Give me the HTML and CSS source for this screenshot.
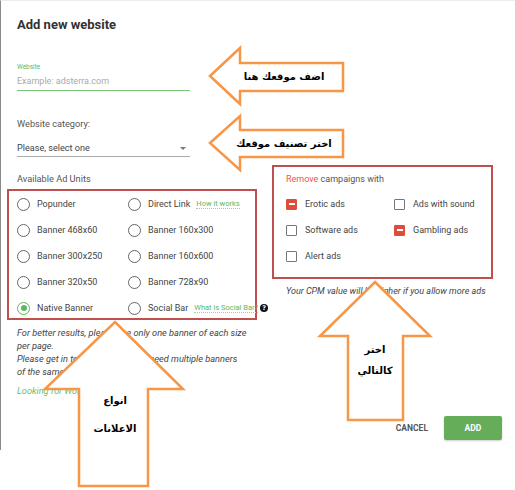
FILE: index.html
```html
<!DOCTYPE html>
<html lang="en">
<head>
    <meta charset="UTF-8">
    <title>Add new website</title>
    <link rel="stylesheet" href="styles.css">
</head>
<body>

    <!-- Диалог добавления сайта -->
    <div class="modal">
        <h2 class="modal-title">Add new website</h2>

        <div class="field">
            <div class="field-label">Website</div>
            <div class="field-input">Example: adsterra.com</div>
        </div>

        <div class="field">
            <div class="field-caption">Website category:</div>
            <div class="select">Please, select one <span class="caret"></span></div>
        </div>

        <div class="units">
            <div class="units-left">
                <div class="section-title">Available Ad Units</div>
                <div class="radio-grid">
                    <div class="radio"><span class="radio-dot"></span>Popunder</div>
                    <div class="radio"><span class="radio-dot"></span>Direct Link <a href="#" class="hint">How it works</a></div>
                    <div class="radio"><span class="radio-dot"></span>Banner 468x60</div>
                    <div class="radio"><span class="radio-dot"></span>Banner 160x300</div>
                    <div class="radio"><span class="radio-dot"></span>Banner 300x250</div>
                    <div class="radio"><span class="radio-dot"></span>Banner 160x600</div>
                    <div class="radio"><span class="radio-dot"></span>Banner 320x50</div>
                    <div class="radio"><span class="radio-dot"></span>Banner 728x90</div>
                    <div class="radio checked"><span class="radio-dot"></span>Native Banner</div>
                    <div class="radio"><span class="radio-dot"></span>Social Bar <a href="#" class="hint">What is Social Bar?</a><span class="help">?</span></div>
                </div>
                <p class="note">For better results, please use only one banner of each size per page.<br>Please get in touch with us if you need multiple banners<br>of the same size on one page.</p>
                <p class="note green">Looking for WordPress plugins</p>
            </div>

            <div class="units-right">
                <div class="filters">
                    <div class="section-title"><span class="red">Remove</span> campaigns with</div>
                    <div class="check-grid">
                        <div class="check checked"><span class="box"></span>Erotic ads</div>
                        <div class="check"><span class="box"></span>Ads with sound</div>
                        <div class="check"><span class="box"></span>Software ads</div>
                        <div class="check checked"><span class="box"></span>Gambling ads</div>
                        <div class="check"><span class="box"></span>Alert ads</div>
                    </div>
                </div>
                <p class="note">Your CPM value will be higher if you allow more ads</p>
            </div>
        </div>

        <div class="actions">
            <button class="btn-cancel">CANCEL</button>
            <button class="btn-add">ADD</button>
        </div>
    </div>

    <!-- Стрелки-подсказки поверх формы -->
    <svg class="hints" width="515" height="490" viewBox="0 0 515 490">
        <polygon class="arrow" points="210,76 240,48 240,63 343,63 343,91 240,91 240,104"/>
        <text x="284" y="80">اضف موقعك هنا</text>

        <polygon class="arrow" points="210,143 240,116 240,130 343,130 343,157 240,157 240,170"/>
        <text x="284" y="147">اختر تصنيف موقعك</text>

        <polygon class="arrow" points="115,322 183,389 148,389 148,486 79,486 79,389 45,389"/>
        <text x="115" y="404">انواع</text>
        <text x="115" y="432">الاعلانات</text>

        <polygon class="arrow" points="375,282 430,336 403,336 403,420 348,420 348,336 320,336"/>
        <text x="375" y="353">اختر</text>
        <text x="375" y="374">كالتالي</text>
    </svg>

</body>
</html>
```

FILE: styles.css
```css
* {
    box-sizing: border-box;
    margin: 0;
    padding: 0;
}

body {
    font-family: Roboto, 'Liberation Sans', sans-serif;
    background-color: #fff;
    color: #444;
    width: 515px;
    height: 490px;
    overflow: hidden;
}

/* Диалог */
.modal {
    height: 450px;
    border-left: 1px solid #8a8a8a;
    border-top: 1px solid #ececec;
    padding: 0 13px 10px 16px;
    display: flex;
    flex-direction: column;
}

.modal-title {
    padding-top: 15px;
    font-size: 13px;
    line-height: 18px;
    font-weight: 700;
    color: #333;
}

.field-label {
    margin-top: 29px;
    font-size: 6.5px;
    line-height: 9px;
    color: #5cb85c;
}

.field-input {
    width: 173px;
    margin-top: 2px;
    padding-bottom: 2px;
    font-size: 9px;
    line-height: 14px;
    color: #aaa;
    border-bottom: 1.5px solid #7cc576;
}

.field-caption {
    margin-top: 26px;
    font-size: 9.2px;
    line-height: 13px;
    color: #555;
}

.select {
    width: 173px;
    margin-top: 11px;
    padding-bottom: 1px;
    font-size: 9.1px;
    line-height: 14px;
    color: #444;
    border-bottom: 1px solid #aaa;
    display: flex;
    justify-content: space-between;
    align-items: center;
}

.caret {
    margin-right: 4px;
    border-left: 3px solid transparent;
    border-right: 3px solid transparent;
    border-top: 3px solid #777;
}

/* Рекламные форматы */
.units {
    display: flex;
    margin-top: 8px;
}

.units-left {
    width: 255px;
    padding-top: 8px;
}

.section-title {
    font-size: 9.2px;
    line-height: 12px;
    color: #555;
}

.red {
    color: #f0524a;
}

.radio-grid {
    display: grid;
    grid-template-columns: 111px 119px;
    grid-template-rows: repeat(5, 26px);
    height: 131px;
    width: 250px;
    margin: 4px 0 0 -10px;
    padding: 0 8px;
    border: 2px solid #c0504d;
}

.radio {
    display: flex;
    align-items: center;
    font-size: 9px;
    color: #444;
    white-space: nowrap;
}

.radio-dot {
    width: 13px;
    height: 13px;
    margin-right: 7px;
    border: 1.5px solid #666;
    border-radius: 50%;
    flex-shrink: 0;
    display: flex;
    align-items: center;
    justify-content: center;
}

.radio.checked .radio-dot {
    border-color: #5cb85c;
}

.radio.checked .radio-dot::after {
    content: "";
    width: 6px;
    height: 6px;
    border-radius: 50%;
    background: #5cb85c;
}

.hint {
    margin-left: 6px;
    font-size: 7.5px;
    color: #5cb85c;
    text-decoration: none;
    border-bottom: 1px dotted #9cd39c;
}

.help {
    width: 8px;
    height: 8px;
    margin-left: 2px;
    flex-shrink: 0;
    border-radius: 50%;
    background: #111;
    color: #fff;
    font-family: 'DejaVu Sans', sans-serif;
    font-size: 6.5px;
    font-weight: 700;
    line-height: 8px;
    text-align: center;
}

.note {
    width: 238px;
    margin-top: 6px;
    font-size: 9.2px;
    line-height: 13px;
    font-style: italic;
    color: #444;
}

.note.green {
    color: #6abf69;
}

/* Фильтры кампаний */
.filters {
    width: 221px;
    padding: 6px 10px 8px 12px;
    border: 2px solid #c0504d;
}

.filters .section-title {
    font-size: 9px;
}

.check-grid {
    display: grid;
    grid-template-columns: 108px 1fr;
    grid-auto-rows: 26px;
    margin-top: 6px;
}

.check {
    display: flex;
    align-items: center;
    font-size: 9px;
    color: #444;
    white-space: nowrap;
}

.box {
    width: 11px;
    height: 11px;
    margin-right: 8px;
    border: 1.5px solid #777;
    border-radius: 1px;
    display: flex;
    align-items: center;
    justify-content: center;
}

.check.checked .box {
    background: #e04b3c;
    border-color: #e04b3c;
}

.check.checked .box::after {
    content: "";
    width: 6px;
    height: 1.5px;
    background: #fff;
}

.units-right .note {
    width: auto;
    margin-left: 14px;
    font-size: 9px;
}

/* Кнопки */
.actions {
    margin-top: auto;
    display: flex;
    justify-content: flex-end;
    align-items: center;
}

.btn-cancel {
    margin-right: 16px;
    background: none;
    border: none;
    font-family: Roboto, sans-serif;
    font-size: 8.5px;
    font-weight: 700;
    color: #555;
}

.btn-add {
    width: 58px;
    height: 24px;
    background-color: #66ad5a;
    border: none;
    border-radius: 2px;
    box-shadow: 0 1px 2px rgba(0, 0, 0, 0.2);
    font-family: Roboto, sans-serif;
    font-size: 8.5px;
    font-weight: 700;
    color: #fff;
}

/* Стрелки */
.hints {
    position: absolute;
    top: 0;
    left: 0;
    pointer-events: none;
}

.arrow {
    fill: #fff;
    stroke: #f79646;
    stroke-width: 2.5;
}

.hints text {
    font-family: 'DejaVu Sans', sans-serif;
    font-size: 10px;
    font-weight: 700;
    fill: #000;
    text-anchor: middle;
    direction: rtl;
}
```
